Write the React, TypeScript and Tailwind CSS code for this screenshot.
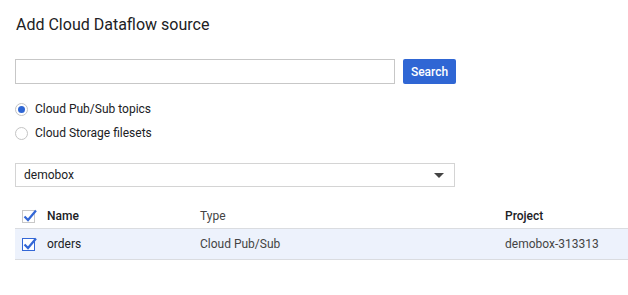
const font = { fontFamily: "Roboto, 'Liberation Sans', sans-serif" };

function Check({ boxed }: { boxed?: boolean }) {
  return (
    <span
      className={`relative inline-block w-[13px] h-[13px] border ${
        boxed ? "border-[#3367d6]" : "border-[#c8c8c8]"
      } bg-white`}
    >
      <svg viewBox="0 0 16 16" className="absolute -top-[3px] -left-[1px] w-[16px] h-[16px]">
        <path d="M2.5 8.5 L6 12 L14 2.5" fill="none" stroke="#3367d6" strokeWidth="2.2" />
      </svg>
    </span>
  );
}

export default function App() {
  return (
    <div className="w-[628px] h-[295px] bg-white text-[#202124] overflow-hidden" style={font}>
      <h1 className="pl-4 pt-[13px] text-[16px] leading-[24px] font-normal">Add Cloud Dataflow source</h1>

      <div className="flex items-center gap-2 pl-[15px] mt-[22px]">
        <input className="w-[380px] h-[25px] border border-[#c7c7c7] outline-none" />
        <button className="h-[25px] w-[53px] rounded-[2px] bg-[#2f66d4] text-white text-[12px] font-medium">
          Search
        </button>
      </div>

      <div className="pl-[15px] mt-[18px] flex flex-col gap-[10px] text-[12px]">
        <label className="flex items-center gap-[7px] h-[14px]">
          <span className="w-[13px] h-[13px] rounded-full border border-[#c4c4c4] flex items-center justify-center">
            <span className="w-[7px] h-[7px] rounded-full bg-[#2f66d4]" />
          </span>
          Cloud Pub/Sub topics
        </label>
        <label className="flex items-center gap-[7px] h-[14px]">
          <span className="w-[13px] h-[13px] rounded-full border border-[#c4c4c4]" />
          Cloud Storage filesets
        </label>
      </div>

      <div className="ml-[15px] mt-[23px] w-[440px] h-[24px] border border-[#d4d4d4] flex items-center justify-between pl-[8px] pr-[10px] text-[12px]">
        <span>demobox</span>
        <span className="w-0 h-0 border-l-[5px] border-r-[5px] border-t-[5px] border-l-transparent border-r-transparent border-t-[#444]" />
      </div>

      <div className="ml-[15px] mt-[17px] text-[12px]">
        <div className="h-[25px] flex items-center border-b border-[#dadce0] font-medium">
          <span className="w-[32px] pl-[7px] flex"><Check /></span>
          <span className="w-[153px]">Name</span>
          <span className="w-[305px] font-normal text-[#444]">Type</span>
          <span>Project</span>
        </div>
        <div className="h-[31px] flex items-center border-b border-[#dadce0] bg-[#edf2fc]">
          <span className="w-[32px] pl-[7px] flex"><Check boxed /></span>
          <span className="w-[153px]">orders</span>
          <span className="w-[305px] text-[#444]">Cloud Pub/Sub</span>
          <span className="text-[#444]">demobox-313313</span>
        </div>
      </div>
    </div>
  );
}
